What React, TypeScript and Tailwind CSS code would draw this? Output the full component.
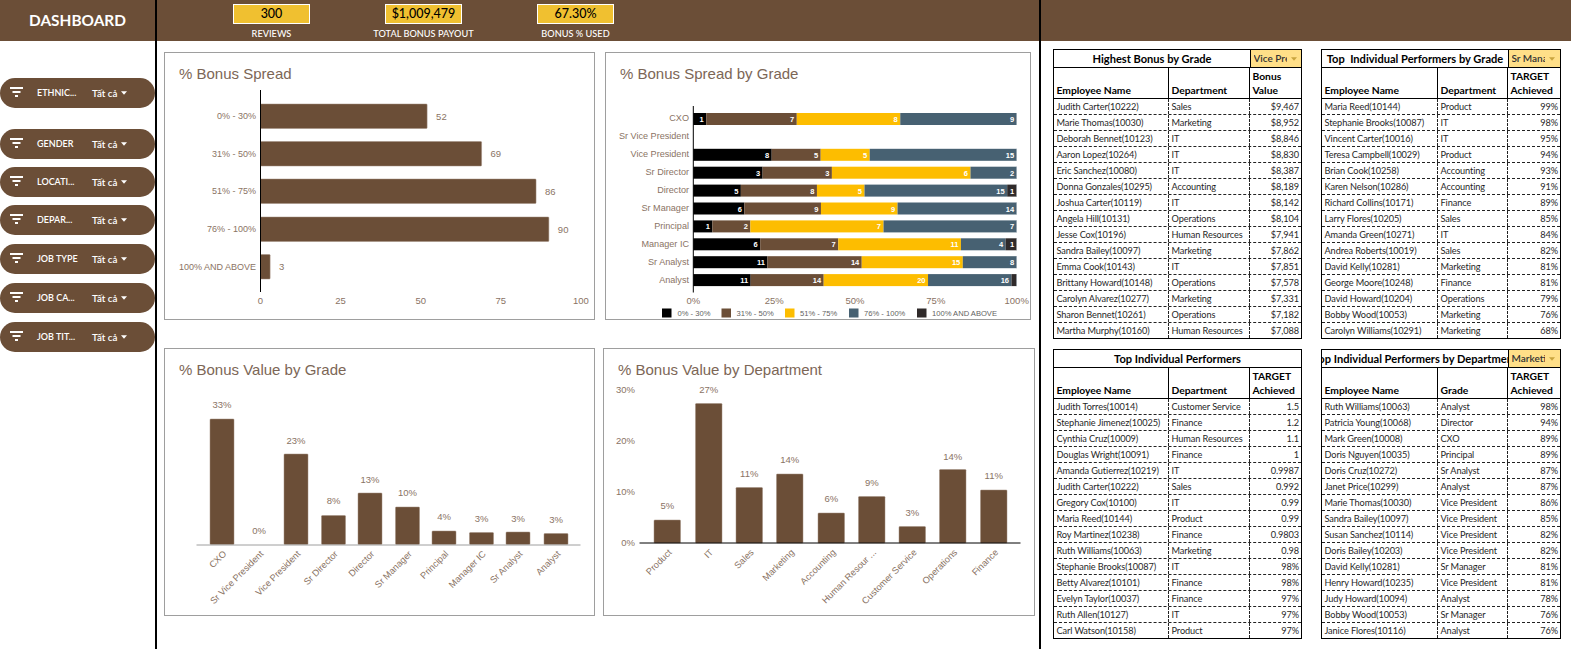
import React from 'react';

const BROWN = '#6b4e37';
const LABEL = '#8a7364';

const filters = [
  { label: 'ETHNIC...', mt: 'mt-[37px]' },
  { label: 'GENDER', mt: 'mt-[21px]' },
  { label: 'LOCATI...', mt: 'mt-[8px]' },
  { label: 'DEPAR...', mt: 'mt-[8px]' },
  { label: 'JOB TYPE', mt: 'mt-[9px]' },
  { label: 'JOB CA...', mt: 'mt-[9px]' },
  { label: 'JOB TIT...', mt: 'mt-[9px]' },
];

const kpis = [
  { value: '300', label: 'REVIEWS' },
  { value: '$1,009,479', label: 'TOTAL BONUS PAYOUT' },
  { value: '67.30%', label: 'BONUS % USED' },
];

const spreadRows = [
  { label: '0% - 30%', value: 52, y: 104 },
  { label: '31% - 50%', value: 69, y: 141.5 },
  { label: '51% - 75%', value: 86, y: 179 },
  { label: '76% - 100%', value: 90, y: 217 },
  { label: '100% AND ABOVE', value: 3, y: 254.5 },
];

const gradeColors = ['#000000', '#6b4e37', '#fdbd00', '#476172', '#2f2a2a'];

const gradeRows = [
  { label: 'CXO', values: [1, 7, 8, 9] },
  { label: 'Sr Vice President', values: [] },
  { label: 'Vice President', values: [8, 5, 5, 15] },
  { label: 'Sr Director', values: [3, 3, 6, 2] },
  { label: 'Director', values: [5, 8, 5, 15, 1] },
  { label: 'Sr Manager', values: [6, 9, 9, 14] },
  { label: 'Principal', values: [1, 2, 7, 7] },
  { label: 'Manager IC', values: [6, 7, 11, 4, 1] },
  { label: 'Sr Analyst', values: [11, 14, 15, 8] },
  { label: 'Analyst', values: [11, 14, 20, 16, 1] },
];

const legend = [
  { label: '0% - 30%', x: 662, tx: 677.5 },
  { label: '31% - 50%', x: 721.5, tx: 736.5 },
  { label: '51% - 75%', x: 785, tx: 800 },
  { label: '76% - 100%', x: 849, tx: 864 },
  { label: '100% AND ABOVE', x: 917, tx: 932 },
];

const valueByGrade = [
  { label: 'CXO', pct: '33%', x: 210, top: 419, ly: 404.5 },
  { label: 'Sr Vice President', pct: '0%', x: 247, top: 545, ly: 530.5 },
  { label: 'Vice President', pct: '23%', x: 284, top: 454, ly: 440 },
  { label: 'Sr Director', pct: '8%', x: 321.5, top: 515.5, ly: 500.5 },
  { label: 'Director', pct: '13%', x: 358, top: 493, ly: 479 },
  { label: 'Sr Manager', pct: '10%', x: 395.5, top: 507, ly: 492.5 },
  { label: 'Principal', pct: '4%', x: 432, top: 531, ly: 516.5 },
  { label: 'Manager IC', pct: '3%', x: 469.5, top: 532.5, ly: 518.5 },
  { label: 'Sr Analyst', pct: '3%', x: 506, top: 532, ly: 518 },
  { label: 'Analyst', pct: '3%', x: 544, top: 533.5, ly: 519.5 },
];

const valueByDept = [
  { label: 'Product', pct: '5%', x: 654, top: 520, ly: 505.5 },
  { label: 'IT', pct: '27%', x: 695.5, top: 403.5, ly: 389.5 },
  { label: 'Sales', pct: '11%', x: 736, top: 487.5, ly: 473.5 },
  { label: 'Marketing', pct: '14%', x: 776.5, top: 474, ly: 459.5 },
  { label: 'Accounting', pct: '6%', x: 818, top: 513, ly: 498.5 },
  { label: 'Human Resour ...', pct: '9%', x: 858.5, top: 496.5, ly: 482 },
  { label: 'Customer Service', pct: '3%', x: 899, top: 526.5, ly: 512.5 },
  { label: 'Operations', pct: '14%', x: 939.5, top: 469.5, ly: 456 },
  { label: 'Finance', pct: '11%', x: 980.5, top: 490, ly: 475.5 },
];

const highestBonus = [
  ['Judith Carter(10222)', 'Sales', '$9,467'],
  ['Marie Thomas(10030)', 'Marketing', '$8,952'],
  ['Deborah Bennet(10123)', 'IT', '$8,846'],
  ['Aaron Lopez(10264)', 'IT', '$8,830'],
  ['Eric Sanchez(10080)', 'IT', '$8,387'],
  ['Donna Gonzales(10295)', 'Accounting', '$8,189'],
  ['Joshua Carter(10119)', 'IT', '$8,142'],
  ['Angela Hill(10131)', 'Operations', '$8,104'],
  ['Jesse Cox(10196)', 'Human Resources', '$7,941'],
  ['Sandra Bailey(10097)', 'Marketing', '$7,862'],
  ['Emma Cook(10143)', 'IT', '$7,851'],
  ['Brittany Howard(10148)', 'Operations', '$7,578'],
  ['Carolyn Alvarez(10277)', 'Marketing', '$7,331'],
  ['Sharon Bennet(10261)', 'Operations', '$7,182'],
  ['Martha Murphy(10160)', 'Human Resources', '$7,088'],
];

const topByGrade = [
  ['Maria Reed(10144)', 'Product', '99%'],
  ['Stephanie Brooks(10087)', 'IT', '98%'],
  ['Vincent Carter(10016)', 'IT', '95%'],
  ['Teresa Campbell(10029)', 'Product', '94%'],
  ['Brian Cook(10258)', 'Accounting', '93%'],
  ['Karen Nelson(10286)', 'Accounting', '91%'],
  ['Richard Collins(10171)', 'Finance', '89%'],
  ['Larry Flores(10205)', 'Sales', '85%'],
  ['Amanda Green(10271)', 'IT', '84%'],
  ['Andrea Roberts(10019)', 'Sales', '82%'],
  ['David Kelly(10281)', 'Marketing', '81%'],
  ['George Moore(10248)', 'Finance', '81%'],
  ['David Howard(10204)', 'Operations', '79%'],
  ['Bobby Wood(10053)', 'Marketing', '76%'],
  ['Carolyn Williams(10291)', 'Marketing', '68%'],
];

const topPerformers = [
  ['Judith Torres(10014)', 'Customer Service', '1.5'],
  ['Stephanie Jimenez(10025)', 'Finance', '1.2'],
  ['Cynthia Cruz(10009)', 'Human Resources', '1.1'],
  ['Douglas Wright(10091)', 'Finance', '1'],
  ['Amanda Gutierrez(10219)', 'IT', '0.9987'],
  ['Judith Carter(10222)', 'Sales', '0.992'],
  ['Gregory Cox(10100)', 'IT', '0.99'],
  ['Maria Reed(10144)', 'Product', '0.99'],
  ['Roy Martinez(10238)', 'Finance', '0.9803'],
  ['Ruth Williams(10063)', 'Marketing', '0.98'],
  ['Stephanie Brooks(10087)', 'IT', '98%'],
  ['Betty Alvarez(10101)', 'Finance', '98%'],
  ['Evelyn Taylor(10037)', 'Finance', '97%'],
  ['Ruth Allen(10127)', 'IT', '97%'],
  ['Carl Watson(10158)', 'Product', '97%'],
];

const topByDept = [
  ['Ruth Williams(10063)', 'Analyst', '98%'],
  ['Patricia Young(10068)', 'Director', '94%'],
  ['Mark Green(10008)', 'CXO', '89%'],
  ['Doris Nguyen(10035)', 'Principal', '89%'],
  ['Doris Cruz(10272)', 'Sr Analyst', '87%'],
  ['Janet Price(10299)', 'Analyst', '87%'],
  ['Marie Thomas(10030)', 'Vice President', '86%'],
  ['Sandra Bailey(10097)', 'Vice President', '85%'],
  ['Susan Sanchez(10114)', 'Vice President', '82%'],
  ['Doris Bailey(10203)', 'Vice President', '82%'],
  ['David Kelly(10281)', 'Sr Manager', '81%'],
  ['Henry Howard(10235)', 'Vice President', '81%'],
  ['Judy Howard(10094)', 'Analyst', '78%'],
  ['Bobby Wood(10053)', 'Sr Manager', '76%'],
  ['Janice Flores(10116)', 'Analyst', '76%'],
];

function FilterPill({ label, mt }: { label: string; mt: string }) {
  return (
    <div className={`${mt} h-[30px] w-[155px] rounded-full bg-[#6b4e37] flex items-center text-white font-semibold`}>
      <svg width="13" height="11" viewBox="0 0 13 11" className="ml-[10px] mt-[-1px] shrink-0">
        <rect x="0" y="0" width="13" height="2" fill="#fff" />
        <rect x="2.5" y="4" width="8" height="2" fill="#fff" />
        <rect x="5" y="8" width="3" height="2" fill="#fff" />
      </svg>
      <span className="ml-[14px] w-[55px] whitespace-nowrap text-[9px]">{label}</span>
      <span className="whitespace-nowrap text-[9.8px]">Tất cả</span>
      <svg width="6" height="4" viewBox="0 0 7 4" className="ml-[3px]">
        <path d="M0 0h7L3.5 4z" fill="#fff" />
      </svg>
    </div>
  );
}

function Kpi({ value, label }: { value: string; label: string }) {
  return (
    <div className="w-[77px] flex flex-col items-center">
      <div className="mt-[4px] h-[20px] w-[77px] border border-white bg-[#f0c030] flex items-center justify-center text-[12.5px] font-medium leading-none text-black">
        {value}
      </div>
      <div className="mt-[3px] text-[9.2px] font-medium leading-[13px] text-white whitespace-nowrap">{label}</div>
    </div>
  );
}

// one chart box, the svg inside uses page coordinates through its viewBox
function ChartCard({ w, h, vx, vy, title, children }: { w: number; h: number; vx: number; vy: number; title: string; children: React.ReactNode }) {
  return (
    <div className="border border-[#9e9e9e] bg-white box-content">
      <svg width={w} height={h} viewBox={`${vx} ${vy} ${w} ${h}`} className="block font-['Liberation_Sans',Arial,sans-serif]">
        <text x={vx + 14} y={vy + 26} fontSize="15" fill="#7c6656">{title}</text>
        {children}
      </svg>
    </div>
  );
}

function SpreadChart() {
  const x0 = 260.5;
  return (
    <ChartCard w={429} h={266} vx={165} vy={53} title="% Bonus Spread">
      {spreadRows.map((r) => (
        <g key={r.label}>
          <text x={256} y={r.y + 15} textAnchor="end" fontSize="9" fill={LABEL}>{r.label}</text>
          <rect x={x0} y={r.y} width={r.value * 3.204} height={24.5} rx="0.8" fill={BROWN} stroke="#a08d7f" strokeWidth="0.5" />
          <text x={x0 + r.value * 3.204 + 9} y={r.y + 15.5} fontSize="9.5" fill={LABEL}>{r.value}</text>
        </g>
      ))}
      <line x1={x0} x2={x0} y1={90} y2={292} stroke="#000" strokeWidth="1" />
      {[0, 25, 50, 75, 100].map((t) => (
        <text key={t} x={x0 + t * 3.204} y={304} textAnchor="middle" fontSize="9.5" fill={LABEL}>{t}</text>
      ))}
    </ChartCard>
  );
}

function GradeChart() {
  const x0 = 693.3;
  const full = 323.4;
  return (
    <ChartCard w={424} h={266} vx={606} vy={53} title="% Bonus Spread by Grade">
      {gradeRows.map((r, i) => {
        const y = 113 + i * 17.9;
        const total = r.values.reduce((a, b) => a + b, 0);
        let acc = 0;
        return (
          <g key={r.label}>
            <text x={689} y={121 + i * 18} textAnchor="end" fontSize="9.1" fill={LABEL}>{r.label}</text>
            {r.values.map((v, j) => {
              const sx = x0 + (acc / total) * full;
              const sw = (v / total) * full;
              acc += v;
              return (
                <g key={j}>
                  <rect x={sx} y={y} width={sw} height={12} fill={gradeColors[j]} />
                  {sw > 6 && (
                    <text x={sx + sw - 2.5} y={y + 9} textAnchor="end" fontSize="7.5" fontWeight="700" fill="#fff">{v}</text>
                  )}
                </g>
              );
            })}
            {total > 0 && <rect x={x0 + full - 0.6} y={y} width={0.6} height={12} fill="#a9b6bf" />}
          </g>
        );
      })}
      <line x1={x0} x2={x0} y1={106} y2={292.5} stroke="#000" strokeWidth="1" />
      {[0, 25, 50, 75, 100].map((t) => (
        <text key={t} x={x0 + (t / 100) * full} y={304} textAnchor="middle" fontSize="9.5" fill={LABEL}>{t}%</text>
      ))}
      {legend.map((l, i) => (
        <g key={l.label}>
          <rect x={l.x} y={308.5} width={9.5} height={9} fill={gradeColors[i]} />
          <text x={l.tx} y={316} fontSize="7.6" fill="#5f5f5f">{l.label}</text>
        </g>
      ))}
    </ChartCard>
  );
}

type ColumnBar = { label: string; pct: string; x: number; top: number; ly: number };

function ColumnBars({ bars, width, base }: { bars: ColumnBar[]; width: number; base: number }) {
  return (
    <>
      {bars.map((b) => {
        const cx = b.x + width / 2;
        return (
          <g key={b.label}>
            {b.top < base && (
              <rect x={b.x} y={b.top} width={width} height={base - b.top} rx="0.8" fill={BROWN} stroke="#a08d7f" strokeWidth="0.5" />
            )}
            <text x={cx} y={b.ly + 3.5} textAnchor="middle" fontSize="9.5" fill={LABEL}>{b.pct}</text>
            <text x={cx + 5} y={base + 10} textAnchor="end" fontSize="9.2" fill={LABEL} transform={`rotate(-45 ${cx + 5} ${base + 10})`}>{b.label}</text>
          </g>
        );
      })}
    </>
  );
}

function ValueGradeChart() {
  return (
    <ChartCard w={429} h={266} vx={165} vy={349} title="% Bonus Value by Grade">
      <ColumnBars bars={valueByGrade} width={24} base={544.5} />
      <line x1={196.5} x2={580.5} y1={545} y2={545} stroke="#9e9e9e" strokeWidth="1" />
    </ChartCard>
  );
}

function ValueDeptChart() {
  return (
    <ChartCard w={430} h={266} vx={604} vy={349} title="% Bonus Value by Department">
      {[['30%', 389.7], ['20%', 440.7], ['10%', 491.7], ['0%', 542.7]].map(([t, y]) => (
        <text key={t} x={635} y={Number(y) + 3.5} textAnchor="end" fontSize="9.5" fill={LABEL}>{t}</text>
      ))}
      <ColumnBars bars={valueByDept} width={26.5} base={543} />
      <line x1={639.5} x2={1020.5} y1={543} y2={543} stroke="#000" strokeWidth="1" />
    </ChartCard>
  );
}

type TableProps = {
  title: string;
  slicer?: string;
  cols: [number, number, number];
  second: string;
  third: string;
  rows: string[][];
};

function DataTable({ title, slicer, cols, second, third, rows }: TableProps) {
  const total = cols[0] + cols[1] + cols[2];
  return (
    <div className="border border-black bg-white" style={{ width: total + 2 }}>
      <div className="h-[18px] flex border-b border-black text-[11.1px] font-bold text-black leading-[17px]">
        <div className="flex-1 min-w-0 overflow-hidden flex justify-center">
          <span className="shrink-0 whitespace-pre">{title}</span>
        </div>
        {slicer && (
          <div className="shrink-0 border-l border-black bg-[#ffdf88] flex items-center pl-[2.5px] overflow-hidden" style={{ width: cols[2] }}>
            <span className="w-[33px] overflow-hidden whitespace-nowrap text-[10px] font-semibold text-[#333]">{slicer}</span>
            <svg width="6" height="4" viewBox="0 0 7 4" className="ml-[4px] shrink-0">
              <path d="M0 0h7L3.5 4z" fill="#c9a43f" />
            </svg>
          </div>
        )}
      </div>
      <div className="h-[31px] flex border-b border-black text-[10.3px] font-bold text-black leading-[14px]">
        <div className="flex items-end pl-[2.5px] pb-[1px] border-r border-black" style={{ width: cols[0] }}>Employee Name</div>
        <div className="flex items-end pl-[2.5px] pb-[1px] border-r border-black" style={{ width: cols[1] }}>{second}</div>
        <div className="pl-[2.5px] pt-[1px] whitespace-pre-line" style={{ width: cols[2] }}>{third}</div>
      </div>
      {rows.map((r, i) => {
        const last = i === rows.length - 1;
        return (
          <div key={r[0]} className={`flex text-[9.2px] tracking-[-0.1px] text-[#1f1f1f] leading-[15px] ${last ? 'h-[15px]' : 'h-[16px] border-b border-dashed border-[#222]'}`}>
            <div className="pl-[2.5px] border-r border-dashed border-[#222] whitespace-nowrap overflow-hidden" style={{ width: cols[0] }}>{r[0]}</div>
            <div className="pl-[2.5px] border-r border-dashed border-[#222] whitespace-nowrap overflow-hidden" style={{ width: cols[1] }}>{r[1]}</div>
            <div className="pr-[2px] text-right" style={{ width: cols[2] }}>{r[2]}</div>
          </div>
        );
      })}
    </div>
  );
}

export default function App() {
  return (
    <div className="w-[1571px] h-[649px] overflow-hidden bg-white flex font-['Lato','Carlito',sans-serif]">
      {/* Left filters */}
      <aside className="w-[157px] shrink-0 border-r-2 border-black">
        <div className="h-[41px] bg-[#6b4e37] flex items-center justify-center text-white font-bold text-[15.4px]">DASHBOARD</div>
        <div className="flex flex-col">
          {filters.map((f) => (
            <FilterPill key={f.label} label={f.label} mt={f.mt} />
          ))}
        </div>
      </aside>

      {/* Charts */}
      <main className="w-[882px] shrink-0">
        <div className="h-[41px] bg-[#6b4e37] flex pl-[76px] gap-[75px]">
          {kpis.map((k) => (
            <Kpi key={k.label} value={k.value} label={k.label} />
          ))}
        </div>
        <div className="mt-[11px] pl-[7px] flex gap-[10px]">
          <SpreadChart />
          <GradeChart />
        </div>
        <div className="mt-[28px] pl-[7px] flex gap-[8px]">
          <ValueGradeChart />
          <ValueDeptChart />
        </div>
      </main>

      {/* Tables */}
      <section className="flex-1 border-l-2 border-black">
        <div className="h-[41px] bg-[#6b4e37]" />
        <div className="mt-[8px] pl-[12px] flex gap-[19px]">
          <DataTable title="Highest Bonus by Grade" slicer="Vice President" cols={[115, 81, 51]} second="Department" third={'Bonus\nValue'} rows={highestBonus} />
          <DataTable title="Top  Individual Performers by Grade" slicer="Sr Manager" cols={[116, 70, 52]} second="Department" third={'TARGET\nAchieved'} rows={topByGrade} />
        </div>
        <div className="mt-[10px] pl-[12px] flex gap-[19px]">
          <DataTable title="Top Individual Performers" cols={[115, 81, 51]} second="Department" third={'TARGET\nAchieved'} rows={topPerformers} />
          <DataTable title="Top Individual Performers by Department" slicer="Marketing" cols={[116, 70, 52]} second="Grade" third={'TARGET\nAchieved'} rows={topByDept} />
        </div>
      </section>
    </div>
  );
}
